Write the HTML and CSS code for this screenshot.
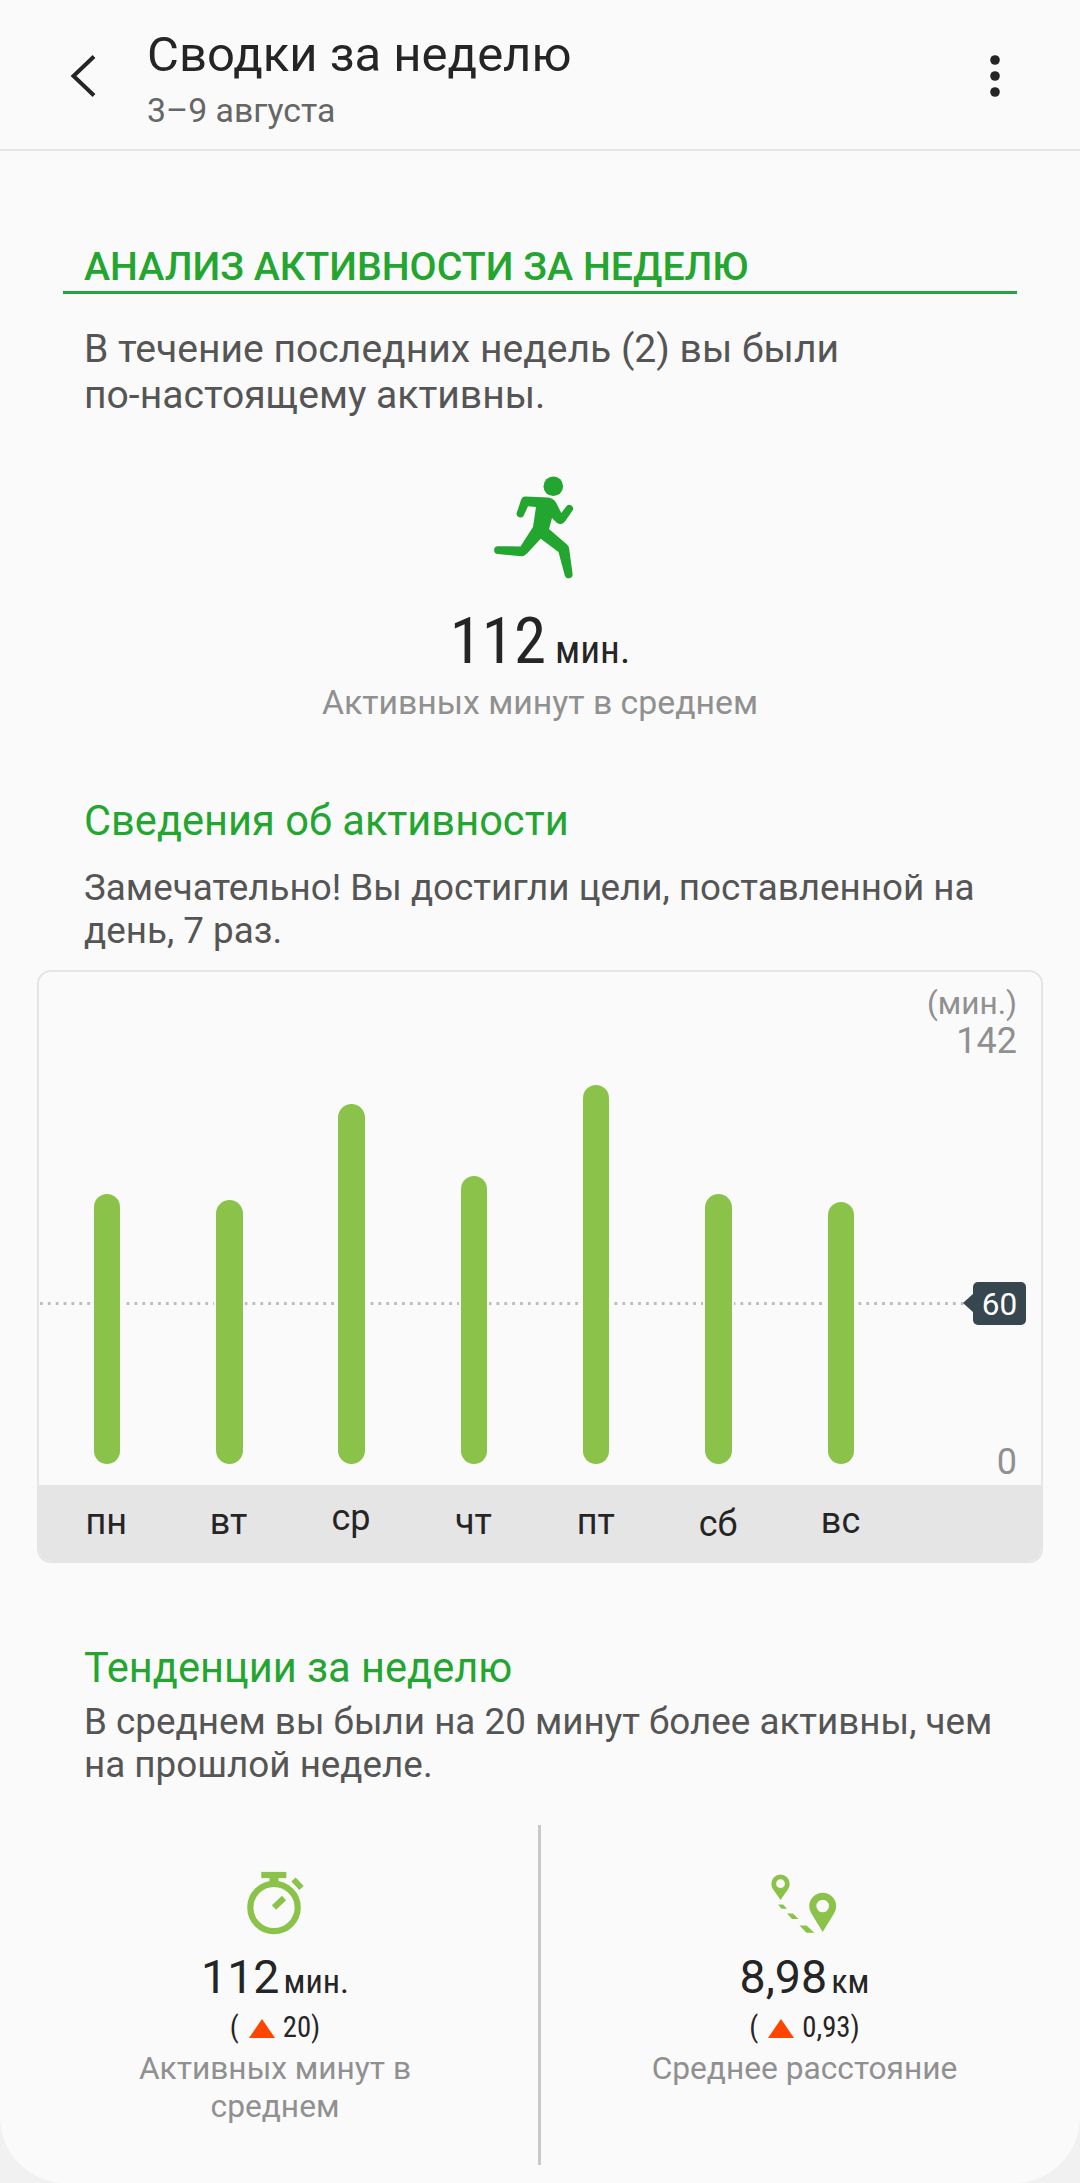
FILE: index.html
```html
<!DOCTYPE html>
<html lang="ru">

<head>
    <meta charset="UTF-8" />
    <meta name="viewport" content="width=device-width, initial-scale=1.0" />
    <title>Сводки за неделю</title>
    <link rel="stylesheet" href="styles.css">
</head>

<body>
    <div class="screen">
        <header class="header">
            <svg class="back-icon" viewBox="0 0 26 42" width="26" height="42">
                <path d="M24 1.5 L3.5 21 L24 40.5" fill="none" stroke="#252525" stroke-width="4" />
            </svg>
            <div class="header-text">
                <h1>Сводки за неделю</h1>
                <p>3–9 августа</p>
            </div>
            <svg class="menu-icon" viewBox="0 0 10 42" width="10" height="42">
                <circle cx="5" cy="5" r="4.8" />
                <circle cx="5" cy="21" r="4.8" />
                <circle cx="5" cy="37" r="4.8" />
            </svg>
        </header>

        <main>
            <!-- Weekly analysis -->
            <section class="analysis">
                <h2>АНАЛИЗ АКТИВНОСТИ ЗА НЕДЕЛЮ</h2>
                <p class="lead">В течение последних недель (2) вы были<br>по-настоящему активны.</p>
                <svg class="runner" viewBox="0 0 80 104" width="80" height="104">
                    <circle cx="59.3" cy="10.3" r="9.8" />
                    <path d="M31 20.4 L54 21.5 Q59 22 62 26.5 L67.3 37 L73 29.5 A4 4 0 0 1 79.2 33.5 L71 45.5 Q67 50 62.5 46.5 L58 42 L55 53 L73 68.5 Q75 70.5 75.2 73 L78.6 98 A4 4 0 0 1 70.8 99.5 L64.5 76 L46.7 62.8 L33 77.5 Q30.5 80.3 27 80.2 L4 78 A3.8 3.8 0 0 1 4 70.2 L26.5 70.5 L39 51 L42 31 L34 30.3 L29.5 40 A3.9 3.9 0 0 1 22.5 37.5 L27 24 Q28.3 20.5 31 20.4 Z" />
                </svg>
                <div class="total">
                    <span class="total-value">112</span>
                    <span class="total-unit">мин.</span>
                </div>
                <p class="total-label">Активных минут в среднем</p>
            </section>

            <!-- Daily chart -->
            <section class="activity">
                <h3>Сведения об активности</h3>
                <p class="text">Замечательно! Вы достигли цели, поставленной на<br>день, 7 раз.</p>
                <div class="chart">
                    <div class="plot">
                        <svg class="goal-line" viewBox="0 0 926 3" width="926" height="3">
                            <path d="M1 1.5 H926" stroke="#bdbdbd" stroke-width="3" stroke-dasharray="2.8 5.07" />
                        </svg>
                        <div class="bars">
                            <div class="bar" style="height: 270px"></div>
                            <div class="bar" style="height: 264px"></div>
                            <div class="bar" style="height: 360px"></div>
                            <div class="bar" style="height: 288px"></div>
                            <div class="bar" style="height: 379px"></div>
                            <div class="bar" style="height: 270px"></div>
                            <div class="bar" style="height: 262px"></div>
                        </div>
                        <div class="scale">
                            <span class="scale-unit">(мин.)</span>
                            <span class="scale-max">142</span>
                            <span class="scale-min">0</span>
                        </div>
                        <div class="goal">60</div>
                    </div>
                    <div class="days">
                        <span>пн</span>
                        <span>вт</span>
                        <span class="day-tall">ср</span>
                        <span>чт</span>
                        <span>пт</span>
                        <span class="day-low">сб</span>
                        <span class="day-round">вс</span>
                    </div>
                </div>
            </section>

            <!-- Trends -->
            <section class="trends">
                <h3>Тенденции за неделю</h3>
                <p class="text">В среднем вы были на 20 минут более активны, чем<br>на прошлой неделе.</p>
                <div class="columns">
                    <div class="column">
                        <svg class="trend-icon" viewBox="0 0 70 66" width="70" height="66">
                            <g fill="none" stroke="#8bc34a">
                                <circle cx="34" cy="37.5" r="23.7" stroke-width="6.2" />
                                <path d="M21.3 5 H46.3" stroke-width="6.2" />
                                <path d="M34 6 V13" stroke-width="9" />
                                <path d="M53.5 9.5 L61.5 18" stroke-width="6" />
                                <path d="M34 37.5 L44 28" stroke-width="6" />
                            </g>
                        </svg>
                        <div class="trend-value"><span>112</span><span class="trend-unit">мин.</span></div>
                        <div class="trend-diff">
                            <span>(</span>
                            <svg viewBox="0 0 26 19" width="26" height="19"><path d="M13 0 L26 19 H0 Z" /></svg>
                            <span>20)</span>
                        </div>
                        <p class="trend-label">Активных минут в<br>среднем</p>
                    </div>
                    <div class="column">
                        <svg class="trend-icon" viewBox="1 0 70 66" width="70" height="66">
                            <g fill="#8bc34a">
                                <path fill-rule="evenodd" d="M11.5 4.5 A9.2 9.2 0 0 1 20.7 13.7 Q20.7 16.5 19 19.3 L11.5 30 L4 19.3 Q2.3 16.5 2.3 13.7 A9.2 9.2 0 0 1 11.5 4.5 Z M11.5 9.3 A4.4 4.4 0 1 0 11.5 18.1 A4.4 4.4 0 1 0 11.5 9.3 Z" />
                                <path fill-rule="evenodd" d="M53.7 22.7 A13.5 13.5 0 0 1 67.2 36.2 Q67.2 39.5 65 43.5 L53.7 62 L42.4 43.5 Q40.2 39.5 40.2 36.2 A13.5 13.5 0 0 1 53.7 22.7 Z M53.7 29.7 A6.3 6.3 0 1 0 53.7 42.3 A6.3 6.3 0 1 0 53.7 29.7 Z" />
                                <path d="M9 34.5 H14 L18 38.7 H12.5 Z M18 43.5 H24 L29.5 49 H23 Z M30.5 55.5 H37.5 L45.5 62.7 H37.5 Z" />
                            </g>
                        </svg>
                        <div class="trend-value"><span>8,98</span><span class="trend-unit">км</span></div>
                        <div class="trend-diff">
                            <span>(</span>
                            <svg viewBox="0 0 26 19" width="26" height="19"><path d="M13 0 L26 19 H0 Z" /></svg>
                            <span>0,93)</span>
                        </div>
                        <p class="trend-label">Среднее расстояние</p>
                    </div>
                </div>
            </section>
        </main>
    </div>
</body>

</html>
```
FILE: styles.css
```css
* {
    margin: 0;
    padding: 0;
    box-sizing: border-box;
}

body {
    font-family: Roboto, "Noto Sans", sans-serif;
    background-color: #f1f1f1;
    color: #252525;
}

h1,
h2,
h3 {
    font-weight: 400;
}

svg {
    display: block;
}

.screen {
    width: 1080px;
    height: 2183px;
    overflow: hidden;
    background-color: #fafafa;
    border-radius: 0 0 66px 66px;
}

.header {
    display: flex;
    height: 151px;
    padding: 26px 80px 0 70px;
    border-bottom: 2px solid #e5e5e5;
}

.back-icon {
    margin-top: 29px;
}

.header-text {
    flex: 1;
    margin-left: 51px;
}

.header h1 {
    font-size: 49px;
    line-height: 57px;
}

.header p {
    font-size: 33.8px;
    line-height: 40px;
    margin-top: 8px;
    color: #666;
}

.menu-icon {
    margin-top: 29px;
    fill: #252525;
}

/* Weekly analysis */
.analysis {
    padding-top: 92px;
}

.analysis h2 {
    height: 51px;
    margin: 0 63px;
    padding-left: 21px;
    border-bottom: 3px solid #27a243;
    color: #22a62f;
    font-size: 39.3px;
    font-weight: 500;
    line-height: 48px;
}

.lead {
    margin: 32px 0 0 84px;
    color: #555;
    font-size: 39.1px;
    line-height: 46px;
}

.runner {
    margin: 58px 0 0 494px;
    fill: #22a62f;
}

.total {
    display: flex;
    justify-content: center;
    align-items: baseline;
    height: 76px;
    margin-top: 23px;
    font-stretch: 75%;
}

.total-value {
    font-size: 65px;
    line-height: 76px;
}

.total-unit {
    margin-left: 9px;
    font-size: 39px;
}

.total-label {
    margin-top: 4px;
    color: #909090;
    font-size: 33.8px;
    line-height: 40px;
    text-align: center;
}

h3 {
    padding-left: 84px;
    color: #22a62f;
    font-size: 41.6px;
    line-height: 50px;
}

.text {
    padding-left: 84px;
    color: #555;
    font-size: 36.8px;
    line-height: 43px;
}

/* Daily chart */
.activity {
    padding-top: 73px;
}

.activity .text {
    margin-top: 20px;
}

.chart {
    width: 1006px;
    height: 593px;
    margin: 18px 0 0 37px;
    border: 2px solid #e5e5e5;
    border-radius: 14px;
    overflow: hidden;
}

.plot {
    position: relative;
    display: flex;
    height: 513px;
}

.goal-line {
    position: absolute;
    left: 0;
    top: 330px;
}

.bars {
    position: relative;
    display: flex;
    align-items: flex-end;
    width: 864px;
    padding: 0 0 21px 7px;
}

.bar {
    flex-shrink: 0;
    width: 26.4px;
    margin: 0 47.95px;
    border-radius: 14px;
    background-color: #8bc34a;
    box-shadow: 0 0 0 2px #fafafa;
}

.scale {
    flex: 1;
    display: flex;
    flex-direction: column;
    align-items: flex-end;
    padding-right: 24px;
    color: #909090;
    font-size: 36px;
    line-height: 40px;
}

.scale-unit {
    margin-top: 13px;
    font-size: 31.6px;
    line-height: 37px;
}

.scale-max {
    margin-top: -1px;
}

.scale-min {
    margin-top: auto;
    margin-bottom: 3px;
}

.goal {
    position: absolute;
    left: 934px;
    top: 310px;
    width: 53px;
    height: 43px;
    border-radius: 5px;
    background-color: #37474f;
    color: #fff;
    font-size: 31.5px;
    line-height: 45px;
    text-align: center;
}

.goal::before {
    content: "";
    position: absolute;
    left: -10px;
    top: 11px;
    border: solid transparent;
    border-width: 10.5px 11px 10.5px 0;
    border-right-color: #37474f;
}

.days {
    display: flex;
    height: 80px;
    padding-left: 6px;
    background-color: #e5e5e5;
    font-size: 36px;
}

.days span {
    width: 122.4px;
    padding-top: 16px;
    line-height: 42px;
    text-align: center;
}

.days .day-tall {
    padding-top: 12px;
}

.days .day-low {
    padding-top: 18px;
}

.days .day-round {
    padding-top: 15px;
}

/* Trends */
.trends {
    padding-top: 80px;
}

.trends .text {
    margin-top: 7px;
}

.columns {
    display: flex;
    height: 340px;
    margin-top: 39px;
}

.column {
    display: flex;
    flex-direction: column;
    align-items: center;
    width: 538px;
    padding: 45px 0 0 12px;
}

.column + .column {
    width: 542px;
    padding: 45px 12px 0 0;
    border-left: 3px solid #c9c9c9;
}

.trend-value {
    display: flex;
    align-items: baseline;
    height: 56px;
    margin-top: 13px;
    font-size: 46.5px;
    line-height: 56px;
}

.trend-unit {
    margin-left: 4px;
    font-size: 34px;
    font-stretch: 75%;
}

.trend-diff {
    display: flex;
    align-items: center;
    height: 36px;
    margin-top: 4px;
    font-size: 28.7px;
    font-stretch: 75%;
    line-height: 36px;
}

.trend-diff svg {
    margin: 3px 8px 0 10px;
    fill: #ff4500;
}

.trend-label {
    margin-top: 5px;
    color: #909090;
    font-size: 31.7px;
    line-height: 38px;
    text-align: center;
}
```
